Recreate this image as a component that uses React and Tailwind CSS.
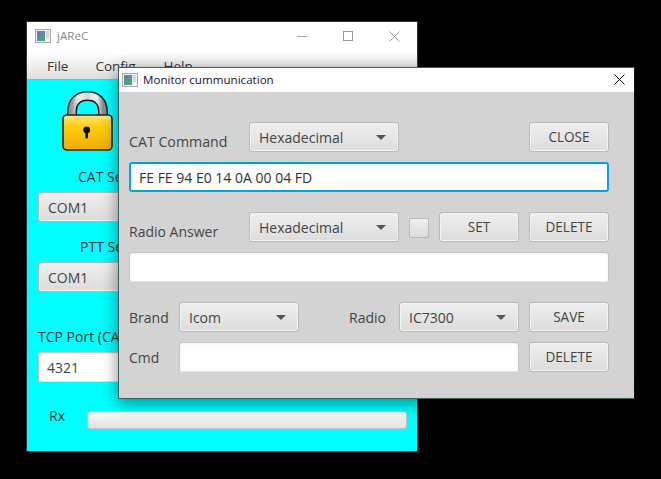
function Icon() {
  return (
    <svg width="16" height="14" viewBox="0 0 16 14" className="shrink-0">
      <rect x="0.5" y="0.5" width="15" height="13" fill="#f2f2f2" stroke="#a8a8a8" />
      <rect x="2" y="2" width="8" height="10" fill="#5f8f9f" />
      <rect x="2" y="2" width="4" height="4" fill="#6a7f9f" />
      <rect x="4" y="7" width="6" height="5" fill="#4f9f7f" />
      <rect x="11" y="2" width="3" height="7" fill="#d0d8e0" />
    </svg>
  );
}

function Lock() {
  return (
    <svg width="52" height="62" viewBox="0 0 52 62">
      <defs>
        <linearGradient id="sh" x1="0" x2="1" y1="0" y2="0">
          <stop offset="0" stopColor="#9a9a9a" />
          <stop offset="0.2" stopColor="#f0f0f0" />
          <stop offset="0.5" stopColor="#d8d8d8" />
          <stop offset="0.8" stopColor="#f0f0f0" />
          <stop offset="1" stopColor="#8a8a8a" />
        </linearGradient>
        <linearGradient id="body" x1="0" x2="0" y1="0" y2="1">
          <stop offset="0" stopColor="#ffe98a" />
          <stop offset="0.3" stopColor="#ffcf10" />
          <stop offset="1" stopColor="#f0ac00" />
        </linearGradient>
      </defs>
      <path d="M10 28V21C10 11 16 5 25.5 5S41 11 41 21V28" fill="none" stroke="#1a1a1a" strokeWidth="10" />
      <path d="M10 28V21C10 11 16 5 25.5 5S41 11 41 21V28" fill="none" stroke="url(#sh)" strokeWidth="7" />
      <rect x="1" y="24" width="49" height="35" rx="4" fill="url(#body)" stroke="#222" strokeWidth="1.6" />
      <circle cx="24.7" cy="39" r="3.4" fill="#111" />
      <rect x="23.4" y="40" width="2.6" height="7.5" rx="1.3" fill="#111" />
    </svg>
  );
}

function Combo({ value, w }) {
  return (
    <div className={`${w} h-[30px] shrink-0 flex items-center justify-between pl-[9px] pr-[12px] rounded-[3px] border border-[#b8b8b8] bg-gradient-to-b from-[#efefef] to-[#dcdcdc] shadow-[inset_0_0_0_1px_#f4f4f4] text-[#444]`}>
      <span>{value}</span>
      <span className="w-0 h-0 border-l-[5px] border-r-[5px] border-t-[5px] border-l-transparent border-r-transparent border-t-[#555]" />
    </div>
  );
}

function Btn({ children }) {
  return (
    <div className="w-[80px] h-[30px] shrink-0 flex items-center justify-center rounded-[3px] border border-[#b8b8b8] bg-gradient-to-b from-[#efefef] to-[#dcdcdc] shadow-[inset_0_0_0_1px_#f4f4f4] text-[#444] text-[13.6px]">
      {children}
    </div>
  );
}

function Field({ className = "", children }) {
  return (
    <div className={`h-[30px] flex items-center px-[8px] rounded-[3px] border border-[#c4c4c4] border-b-[#e4e4e4] bg-white shadow-[inset_0_1px_2px_#f0f0f0] text-[#444] ${className}`}>
      {children}
    </div>
  );
}

export default function App() {
  return (
    <div className="relative w-[661px] h-[479px] bg-black overflow-hidden font-['Open_Sans','Noto_Sans',sans-serif] text-[14px]">
      {/* back window */}
      <div className="absolute left-[26px] top-[21px] w-[392px] h-[431px] border border-[#333] bg-[#00ffff] flex flex-col">
        <div className="h-[30px] pb-[2px] bg-white flex items-center pl-[8px] gap-[6px] text-[11.6px] text-[#8a8a8a] shrink-0">
          <Icon />
          <span>jAReC</span>
          <div className="ml-auto flex items-center">
            <div className="w-[46px] flex justify-center"><div className="w-[10px] h-px bg-[#aaa]" /></div>
            <div className="w-[46px] flex justify-center"><div className="w-[10px] h-[10px] border border-[#999]" /></div>
            <div className="w-[46px] flex justify-center">
              <svg width="11" height="11" viewBox="0 0 11 11"><path d="M0.5 0.5L10.5 10.5M10.5 0.5L0.5 10.5" stroke="#999" /></svg>
            </div>
          </div>
        </div>
        <div className="h-[28px] pt-[2px] shrink-0 bg-gradient-to-b from-white to-[#dedede] border-b border-[#a8a8a8] flex items-center pl-[20px] gap-[27px] text-[#333] text-[13.5px]">
          <span>File</span><span>Config</span><span className="ml-[1px]">Help</span>
        </div>
        <div className="flex-1 flex flex-col pl-[11px] pr-[10px]">
          <div className="ml-[24px] mt-[11px] h-[62px]"><Lock /></div>
          <div className="ml-[40px] mt-[14px] h-[20px] leading-[20px] text-[#333]">CAT Serial</div>
          <div className="mt-[5px]"><Combo value="COM1" w="w-[130px]" /></div>
          <div className="ml-[42px] mt-[15px] h-[20px] leading-[20px] text-[#333]">PTT Serial</div>
          <div className="mt-[5px]"><Combo value="COM1" w="w-[130px]" /></div>
          <div className="mt-[35px] h-[20px] leading-[20px] text-[#333]">TCP Port (CAT)</div>
          <Field className="mt-[5px] w-[130px]">4321</Field>
          <div className="mt-[23px] flex items-center gap-[22px]">
            <span className="ml-[11px] mb-[8px] text-[#333]">Rx</span>
            <div className="w-[320px] h-[18px] rounded-[3px] border border-[#c4c4c4] bg-gradient-to-b from-[#fafafa] to-[#e2e2e2]" />
          </div>
        </div>
      </div>

      {/* front window */}
      <div className="absolute left-[118px] top-[67px] w-[517px] h-[332px] border border-[#3a5f5f] border-r-[#111] bg-[#d3d3d3] flex flex-col shadow-[0_4px_16px_rgba(0,0,0,0.45)]">
        <div className="h-[24px] pb-[1px] bg-white shrink-0 flex items-center pl-[3px] gap-[5px] text-[11.6px] text-[#1a1030]">
          <Icon />
          <span>Monitor cummunication</span>
          <svg className="ml-auto mr-[9px]" width="11" height="11" viewBox="0 0 11 11"><path d="M0.5 0.5L10.5 10.5M10.5 0.5L0.5 10.5" stroke="#111" /></svg>
        </div>
        <div className="flex-1 flex flex-col pl-[10px] pr-[25px] pt-[30px]">
          <div className="flex items-end">
            <span className="w-[120px] text-[#444] text-[14.2px] leading-[20px]">CAT Command</span>
            <Combo value="Hexadecimal" w="w-[150px]" />
            <div className="ml-auto"><Btn>CLOSE</Btn></div>
          </div>
          <div className="mt-[10px] h-[30px] flex items-center px-[8px] rounded-[3px] border-2 border-[#04a5dc] bg-white text-[#333]">FE FE 94 E0 14 0A 00 04 FD</div>
          <div className="mt-[20px] flex items-end">
            <span className="w-[120px] text-[#444] leading-[20px]">Radio Answer</span>
            <Combo value="Hexadecimal" w="w-[150px]" />
            <div className="ml-[10px] mr-[10px] mb-[4px] w-[20px] h-[20px] rounded-[2px] border border-[#b8b8b8] bg-gradient-to-b from-[#efefef] to-[#dcdcdc]" />
            <Btn>SET</Btn>
            <div className="ml-[10px]"><Btn>DELETE</Btn></div>
          </div>
          <Field className="mt-[10px]" />
          <div className="mt-[20px] flex items-center">
            <span className="w-[50px] text-[#444]">Brand</span>
            <Combo value="Icom" w="w-[120px]" />
            <span className="ml-[50px] w-[50px] text-[#444]">Radio</span>
            <Combo value="IC7300" w="w-[120px]" />
            <div className="ml-[10px]"><Btn>SAVE</Btn></div>
          </div>
          <div className="mt-[10px] flex items-center">
            <span className="w-[50px] text-[#444]">Cmd</span>
            <Field className="w-[340px]" />
            <div className="ml-[10px]"><Btn>DELETE</Btn></div>
          </div>
        </div>
      </div>
    </div>
  );
}
